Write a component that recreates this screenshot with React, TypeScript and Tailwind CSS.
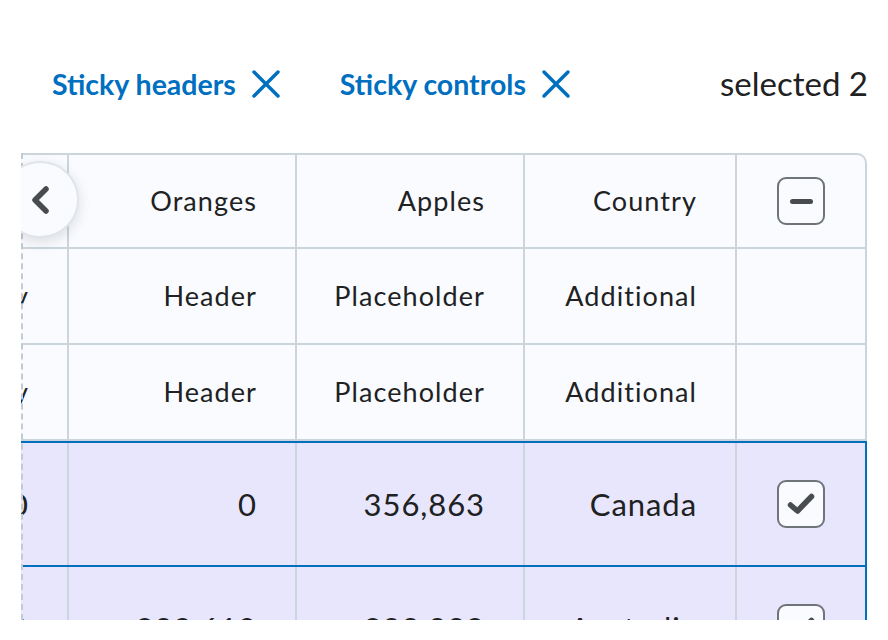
import React from 'react';

const LINK = 'text-[#006fbf]';

function CloseIcon() {
  return (
    <svg width="32" height="32" viewBox="0 0 32 32" fill="none" className="shrink-0">
      <path d="M4 4 L28 28 M28 4 L4 28" stroke="#006fbf" strokeWidth="3.5" strokeLinecap="round" />
    </svg>
  );
}

function StickyToggle({ label }: { label: string }) {
  return (
    <button className={`flex items-center gap-[14px] font-bold text-[28.5px] ${LINK}`}>
      {label}
      <CloseIcon />
    </button>
  );
}

function Checkbox({ state }: { state: 'checked' | 'indeterminate' }) {
  return (
    <div className="w-[48px] h-[48px] rounded-[9px] border-2 border-[#6e7477] bg-[#f9fbff] flex items-center justify-center">
      {state === 'checked' ? (
        <svg width="30" height="26" viewBox="0 0 30 26" fill="none">
          <path d="M4.5 14 L11.5 20 L25.5 5.5" stroke="#494c4e" strokeWidth="5.5" strokeLinecap="round" strokeLinejoin="round" />
        </svg>
      ) : (
        <div className="w-[23px] h-[5px] rounded-full bg-[#494c4e]" />
      )}
    </div>
  );
}

type Row = {
  cells: string[];
  kind: 'head' | 'sub' | 'selected';
  check?: 'checked' | 'indeterminate';
};

const rows: Row[] = [
  { cells: ['Summary', 'Oranges', 'Apples', 'Country'], kind: 'head', check: 'indeterminate' },
  { cells: ['Summary', 'Header', 'Placeholder', 'Additional'], kind: 'sub' },
  { cells: ['Summary', 'Header', 'Placeholder', 'Additional'], kind: 'sub' },
  { cells: ['2,000', '0', '356,863', 'Canada'], kind: 'selected', check: 'checked' },
  { cells: ['9,000', '298,610', '299,998', 'Australia'], kind: 'selected', check: 'checked' },
];

const widths = ['w-[228px]', 'w-[228px]', 'w-[228px]', 'w-[212px]'];

function TableRow({ row, first }: { row: Row; first: boolean }) {
  const selected = row.kind === 'selected';
  const rowCls = selected
    ? 'h-[124px] bg-[#e8e6fc] border-t-2 border-r-2 border-[#006fbf] text-[31px] tracking-[0.03em] text-[#202122]'
    : `h-[96px] bg-[#f9fbff] border-b-2 border-r-2 border-[#cdd5dc] text-[27px] tracking-[0.04em] text-[#202122] ${first ? 'border-t-2 rounded-tr-[10px]' : ''}`;
  return (
    <div className={`flex shrink-0 ${rowCls}`}>
      {row.cells.map((c, i) => (
        <div
          key={i}
          className={`${widths[i]} shrink-0 flex items-center justify-end pr-[38px] border-r-2 border-[#cdd5dc] whitespace-nowrap`}
        >
          {c}
        </div>
      ))}
      <div className="w-[128px] shrink-0 flex items-center justify-center">
        {row.check && <Checkbox state={row.check} />}
      </div>
    </div>
  );
}

export default function App() {
  return (
    <div className="w-[888px] h-[640px] bg-white overflow-hidden font-['Lato',sans-serif]">
      <div className="flex items-center h-[60px] mt-[54px] pl-[52px] pr-[20px]">
        <StickyToggle label="Sticky headers" />
        <div className="w-[58px]" />
        <StickyToggle label="Sticky controls" />
        <span className="ml-auto text-[33px] text-[#202122]">selected 2</span>
      </div>

      <div className="relative mt-[39px] ml-[21px] w-[846px] h-[467px] overflow-hidden">
        <div className="flex flex-col ml-[-180px] w-[1026px]">
          {rows.map((r, i) => (
            <TableRow key={i} row={r} first={i === 0} />
          ))}
        </div>

        {/* left scroll edge */}
        <div className="absolute left-0 top-0 bottom-0 border-l-2 border-dashed border-[#c3cbd2]" />

        {/* scroll left button */}
        <button className="absolute left-[-19px] top-[8px] w-[77px] h-[77px] rounded-full bg-[#f9fbff] border-2 border-[#dfe5ea] shadow-[0_4px_14px_rgba(0,0,0,0.12)] flex items-center justify-center">
          <svg width="30" height="30" viewBox="0 0 30 30" fill="none">
            <path d="M20 4 L9 15 L20 26" stroke="#494c4e" strokeWidth="5.5" strokeLinecap="round" strokeLinejoin="round" />
          </svg>
        </button>
      </div>
    </div>
  );
}
